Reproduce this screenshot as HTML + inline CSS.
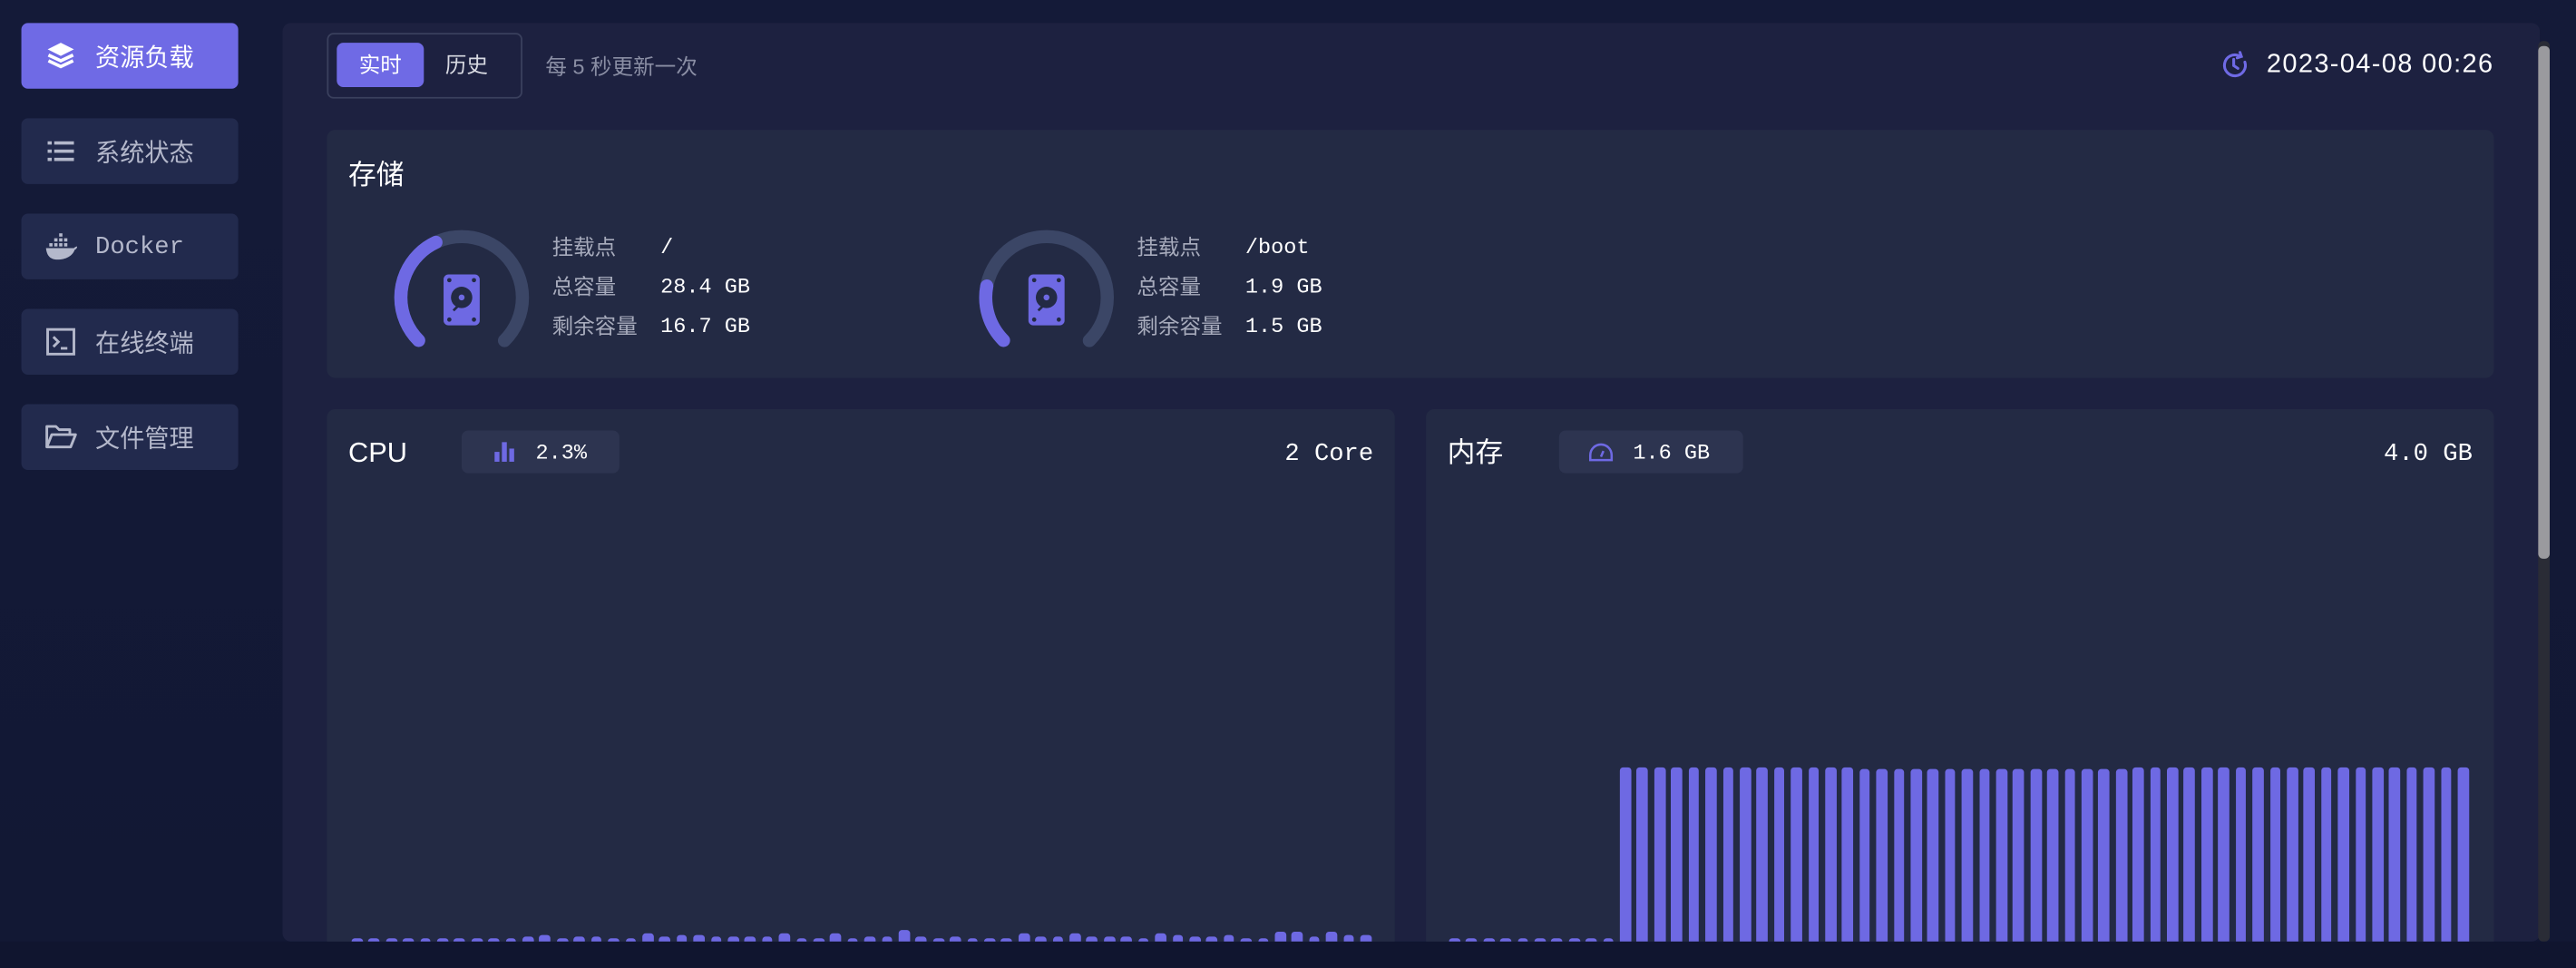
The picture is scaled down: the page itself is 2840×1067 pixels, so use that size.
<!DOCTYPE html>
<html><head><meta charset="utf-8"><style>
*{box-sizing:border-box;margin:0;padding:0}
html,body{width:2840px;height:1066px;overflow:hidden;background:#10152f}
.root{position:absolute;left:0;top:0;width:1568px;height:589px;transform:scale(1.81122);transform-origin:0 0;background:linear-gradient(180deg,#141a38 0%,#121834 100%);font-family:"Liberation Sans","Noto Sans CJK SC",sans-serif;color:#fff}
.abs{position:absolute}
.nav{position:absolute;left:13px;width:132px;height:40px;border-radius:4px;background:#222a4d;color:#b4b8cb;font-size:15px;display:flex;align-items:center;padding-left:14px}
.nav svg{width:20px;height:20px;margin-right:11px;flex:none}
.nav.on{background:#6f6ae5;color:#fff}
.main{position:absolute;left:172px;top:14px;width:1374px;height:559px;background:#1d2140;border-radius:5px}
.card{position:absolute;background:#232a44;border-radius:5px}
.lbl{position:absolute;color:#a7abbc;font-size:13px}
.val{position:absolute;color:#fff;font-family:"Liberation Mono",monospace;font-size:13px}
.bars{position:absolute;bottom:0;display:flex;justify-content:space-between;align-items:flex-end}
.bars i{display:block;width:6.7px;background:#6e69e3;border-radius:2px 2px 0 0}
.badge{position:absolute;height:26px;background:#2d3450;border-radius:4px;display:flex;align-items:center;font-family:"Liberation Mono",monospace;font-size:13px}
</style></head><body><div class="root">

<div class="nav on" style="top:14px"><svg viewBox="0 0 20 20"><path d="M10 2 L18 6 L10 10 L2 6Z" fill="#fff"/><path d="M2.5 9.5 L10 13 L17.5 9.5 M2.5 13 L10 16.5 L17.5 13" stroke="#fff" stroke-width="2" fill="none"/></svg>资源负载</div>
<div class="nav" style="top:72px"><svg viewBox="0 0 20 20" fill="#b4b8cb"><rect x="2" y="4" width="2.5" height="2"/><rect x="6" y="4" width="12" height="2"/><rect x="2" y="9" width="2.5" height="2"/><rect x="6" y="9" width="12" height="2"/><rect x="2" y="14" width="2.5" height="2"/><rect x="6" y="14" width="12" height="2"/></svg>系统状态</div>
<div class="nav" style="top:130px;font-family:'Liberation Mono',monospace"><svg viewBox="0 0 20 20" fill="#b4b8cb"><path d="M1 11 H18 C19 10 20 10 20 10 C20 11 19 12 18.5 12 C17 16 13 18 8 18 C4 18 1.5 16 1 11Z"/><rect x="3" y="8" width="2" height="2"/><rect x="6" y="8" width="2" height="2"/><rect x="9" y="8" width="2" height="2"/><rect x="12" y="8" width="2" height="2"/><rect x="6" y="5" width="2" height="2"/><rect x="9" y="5" width="2" height="2"/><rect x="12" y="5" width="2" height="2"/><rect x="9" y="2" width="2" height="2"/></svg>Docker</div>
<div class="nav" style="top:188px"><svg viewBox="0 0 20 20" fill="none" stroke="#b4b8cb" stroke-width="1.6"><rect x="2" y="2.5" width="16" height="15"/><path d="M5.5 7 L8.5 10 L5.5 13"/><path d="M10 14 H14"/></svg>在线终端</div>
<div class="nav" style="top:246px"><svg viewBox="0 0 20 20" fill="none" stroke="#b4b8cb" stroke-width="1.6" stroke-linejoin="round"><path d="M1.5 16 V3.5 H7 L9 5.5 H15.5 V8"/><path d="M1.5 16 L4.5 8.5 H19 L16 16Z"/></svg>文件管理</div>

<div class="main"></div>
<div class="abs" style="left:1545px;top:25px;width:7px;height:548px;background:#2a2c36;border-radius:3px"></div>
<div class="abs" style="left:1545px;top:28px;width:7px;height:312px;background:#9a9a9e;border-radius:3px"></div>

<div class="abs" style="left:199px;top:20px;width:119px;height:40px;border:1px solid #3a405d;border-radius:4px"></div>
<div class="abs" style="left:205px;top:26px;width:53px;height:27px;background:#6f6ae5;border-radius:4px;font-size:13px;text-align:center;line-height:27px">实时</div>
<div class="abs" style="left:271px;top:26px;font-size:13px;line-height:27px;color:#d8dae2">历史</div>
<div class="abs" style="left:332px;top:30px;font-size:13px;color:#8a8ea4">每 5 秒更新一次</div>
<svg class="abs" style="left:1352px;top:31px" width="17" height="17" viewBox="0 0 20 20" fill="none" stroke="#6f6ae5" stroke-width="2" stroke-linecap="round"><path d="M17 8 A7.5 7.5 0 1 1 13 3.5"/><path d="M13.5 1 L14.5 4 L11.5 5"/><path d="M9 6 V10.5 L12 12.5"/></svg>
<div class="abs" style="left:1340px;top:31px;width:178px;text-align:right;font-size:16px;letter-spacing:0.75px;color:#fff">2023-04-08 00:26</div>

<div class="card" style="left:199px;top:79px;width:1319px;height:151px"></div>
<div class="abs" style="left:212px;top:92px;font-size:17px">存储</div>

<svg class="abs" style="left:236px;top:136px" width="90" height="90" viewBox="0 0 90 90"><g transform="rotate(135 45 45)" fill="none" stroke-width="8" stroke-linecap="round"><circle cx="45" cy="45" r="37" stroke="#3b4666" stroke-dasharray="174.4 300"/><circle cx="45" cy="45" r="37" stroke="#6e69e3" stroke-dasharray="71 300"/></g><rect x="34" y="31" width="22" height="31" rx="3" fill="#6e69e3"/><g fill="#232a44"><circle cx="37.5" cy="34.5" r="1.3"/><circle cx="52.5" cy="34.5" r="1.3"/><circle cx="37.5" cy="58.5" r="1.3"/><circle cx="52.5" cy="58.5" r="1.3"/><circle cx="45" cy="45" r="6.5"/></g><circle cx="45" cy="45" r="1.8" fill="#6e69e3"/><path d="M43 50 L40 53" stroke="#232a44" stroke-width="1.5"/></svg>
<div class="lbl" style="left:336px;top:140px">挂载点</div><div class="val" style="left:402px;top:143px">/</div>
<div class="lbl" style="left:336px;top:164px">总容量</div><div class="val" style="left:402px;top:167px">28.4 GB</div>
<div class="lbl" style="left:336px;top:188px">剩余容量</div><div class="val" style="left:402px;top:191px">16.7 GB</div>

<svg class="abs" style="left:592px;top:136px" width="90" height="90" viewBox="0 0 90 90"><g transform="rotate(135 45 45)" fill="none" stroke-width="8" stroke-linecap="round"><circle cx="45" cy="45" r="37" stroke="#3b4666" stroke-dasharray="174.4 300"/><circle cx="45" cy="45" r="37" stroke="#6e69e3" stroke-dasharray="36 300"/></g><rect x="34" y="31" width="22" height="31" rx="3" fill="#6e69e3"/><g fill="#232a44"><circle cx="37.5" cy="34.5" r="1.3"/><circle cx="52.5" cy="34.5" r="1.3"/><circle cx="37.5" cy="58.5" r="1.3"/><circle cx="52.5" cy="58.5" r="1.3"/><circle cx="45" cy="45" r="6.5"/></g><circle cx="45" cy="45" r="1.8" fill="#6e69e3"/><path d="M43 50 L40 53" stroke="#232a44" stroke-width="1.5"/></svg>
<div class="lbl" style="left:692px;top:140px">挂载点</div><div class="val" style="left:758px;top:143px">/boot</div>
<div class="lbl" style="left:692px;top:164px">总容量</div><div class="val" style="left:758px;top:167px">1.9 GB</div>
<div class="lbl" style="left:692px;top:188px">剩余容量</div><div class="val" style="left:758px;top:191px">1.5 GB</div>

<div class="card" style="left:199px;top:249px;width:650px;height:340px"></div>
<div class="abs" style="left:212px;top:266px;font-size:17px">CPU</div>
<div class="badge" style="left:281px;top:262px;width:96px"><svg style="margin:0 13px 0 20px" width="12" height="12" viewBox="0 0 12 12" fill="#6e69e3"><rect x="0" y="6" width="3" height="6"/><rect x="4.5" y="0" width="3" height="12"/><rect x="9" y="4" width="3" height="8"/></svg>2.3%</div>
<div class="abs" style="left:700px;top:268px;width:136px;text-align:right;font-family:'Liberation Mono',monospace;font-size:15px">2 Core</div>
<div class="bars" style="left:214px;width:621px;top:400px;height:173px">
<i style="height:2.2px"></i><i style="height:2.2px"></i><i style="height:2.2px"></i><i style="height:2.2px"></i><i style="height:2.2px"></i><i style="height:2.2px"></i><i style="height:2.2px"></i><i style="height:2.2px"></i><i style="height:2.2px"></i><i style="height:2.2px"></i><i style="height:3.3px"></i><i style="height:3.9px"></i><i style="height:2.2px"></i><i style="height:3.3px"></i><i style="height:2.6px"></i><i style="height:2.2px"></i><i style="height:2.2px"></i><i style="height:4.8px"></i><i style="height:2.6px"></i><i style="height:3.9px"></i><i style="height:3.9px"></i><i style="height:2.6px"></i><i style="height:3.3px"></i><i style="height:3.3px"></i><i style="height:3.3px"></i><i style="height:4.6px"></i><i style="height:2.2px"></i><i style="height:2.2px"></i><i style="height:4.6px"></i><i style="height:2.2px"></i><i style="height:2.6px"></i><i style="height:3.3px"></i><i style="height:6.6px"></i><i style="height:2.6px"></i><i style="height:2.2px"></i><i style="height:3.3px"></i><i style="height:2.2px"></i><i style="height:2.2px"></i><i style="height:2.2px"></i><i style="height:4.8px"></i><i style="height:3.3px"></i><i style="height:2.6px"></i><i style="height:5.3px"></i><i style="height:2.6px"></i><i style="height:2.6px"></i><i style="height:2.6px"></i><i style="height:2.2px"></i><i style="height:4.8px"></i><i style="height:3.9px"></i><i style="height:2.6px"></i><i style="height:2.6px"></i><i style="height:4.2px"></i><i style="height:2.2px"></i><i style="height:2.2px"></i><i style="height:6.1px"></i><i style="height:6.1px"></i><i style="height:3.3px"></i><i style="height:6.1px"></i><i style="height:3.9px"></i><i style="height:3.9px"></i>
</div>

<div class="card" style="left:868px;top:249px;width:650px;height:340px"></div>
<div class="abs" style="left:881px;top:261px;font-size:17px">内存</div>
<div class="badge" style="left:949px;top:262px;width:112px"><svg style="margin:0 12px 0 18px" width="15" height="12" viewBox="0 0 15 12" fill="none" stroke="#6e69e3" stroke-width="1.4"><path d="M1 11 V8 A6.5 6.5 0 0 1 14 8 V11 Z"/><path d="M7.5 9 L9 5.5"/></svg>1.6 GB</div>
<div class="abs" style="left:1370px;top:268px;width:135px;text-align:right;font-family:'Liberation Mono',monospace;font-size:15px">4.0 GB</div>
<div class="bars" style="left:882px;width:621px;top:400px;height:173px">
<i style="height:2.2px"></i><i style="height:2.2px"></i><i style="height:2.2px"></i><i style="height:2.2px"></i><i style="height:2.2px"></i><i style="height:2.2px"></i><i style="height:2.2px"></i><i style="height:2.2px"></i><i style="height:2.2px"></i><i style="height:2.2px"></i>
<i style="height:106px"></i><i style="height:106px"></i><i style="height:106px"></i><i style="height:106px"></i><i style="height:106px"></i><i style="height:106px"></i><i style="height:106px"></i><i style="height:106px"></i><i style="height:106px"></i><i style="height:106.5px"></i><i style="height:106.5px"></i><i style="height:106.5px"></i><i style="height:106.5px"></i><i style="height:106px"></i><i style="height:105.5px"></i><i style="height:105.5px"></i><i style="height:105.5px"></i><i style="height:105.5px"></i><i style="height:105.5px"></i><i style="height:105.5px"></i><i style="height:105.5px"></i><i style="height:105.5px"></i><i style="height:105.5px"></i><i style="height:105.5px"></i><i style="height:105.5px"></i><i style="height:105.5px"></i><i style="height:105.5px"></i><i style="height:105.5px"></i><i style="height:105.5px"></i><i style="height:105.5px"></i><i style="height:106px"></i><i style="height:106px"></i><i style="height:106px"></i><i style="height:106px"></i><i style="height:106px"></i><i style="height:106px"></i><i style="height:106px"></i><i style="height:106px"></i><i style="height:106px"></i><i style="height:106px"></i><i style="height:106px"></i><i style="height:106px"></i><i style="height:106px"></i><i style="height:106px"></i><i style="height:106px"></i><i style="height:106px"></i><i style="height:106px"></i><i style="height:106px"></i><i style="height:106px"></i><i style="height:106px"></i>
</div>

<div class="abs" style="left:0;top:573px;width:1568px;height:16px;background:#10152f"></div>
</div></body></html>
